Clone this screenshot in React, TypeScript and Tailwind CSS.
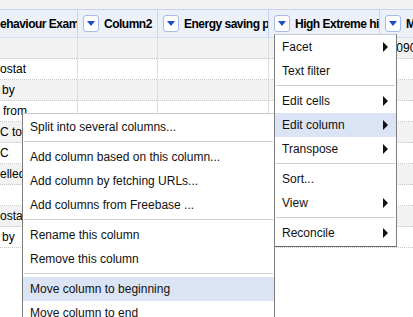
import React from "react";

type Item = { label: string; sub?: boolean; active?: boolean } | "sep";

const mainMenu: Item[] = [
  { label: "Facet", sub: true },
  { label: "Text filter" },
  "sep",
  { label: "Edit cells", sub: true },
  { label: "Edit column", sub: true, active: true },
  { label: "Transpose", sub: true },
  "sep",
  { label: "Sort..." },
  { label: "View", sub: true },
  "sep",
  { label: "Reconcile", sub: true },
];

const editColumnMenu: Item[] = [
  { label: "Split into several columns..." },
  "sep",
  { label: "Add column based on this column..." },
  { label: "Add column by fetching URLs..." },
  { label: "Add columns from Freebase ..." },
  "sep",
  { label: "Rename this column" },
  { label: "Remove this column" },
  "sep",
  { label: "Move column to beginning", active: true },
  { label: "Move column to end" },
];

// first column is scrolled, so only the tail of each value shows
const rows: { text: string; pad?: string; last?: string }[] = [
  { text: "", last: "20090" },
  { text: "ostat" },
  { text: "by", pad: "pl-[2px]" },
  { text: "from", pad: "pl-[3px]" },
  { text: "C to" },
  { text: "C" },
  { text: "elled)" },
  { text: "" },
  { text: "ostat" },
  { text: "by", pad: "pl-[2px]" },
];

function DropBtn() {
  return (
    <span className="flex h-[17px] w-[16px] shrink-0 items-center justify-center rounded-[3px] border border-[#a6bce6] bg-white">
      <span className="h-0 w-0 border-x-[4px] border-t-[5px] border-x-transparent border-t-[#1d4ccc]" />
    </span>
  );
}

function HeadCell({ title, w, last }: { title: string; w: string; last?: boolean }) {
  return (
    <div className={`flex items-center gap-[5px] overflow-hidden whitespace-nowrap pl-[5px] ${w} ${last ? "" : "border-r border-[#c5d3ef]"}`}>
      <DropBtn />
      <span className="text-[12px] font-bold tracking-[-0.5px] text-black">{title}</span>
    </div>
  );
}

function Menu({ items, className }: { items: Item[]; className: string }) {
  return (
    <div className={`absolute border border-x-[#7d7d7d] border-t-[#c9c9c9] border-b-[#6b6b6b] bg-white ${className}`}>
      {items.map((it, i) =>
        it === "sep" ? (
          <div key={i} className="mx-px mt-[2px] mb-[3px] h-px bg-[#cfcfcf]" />
        ) : (
          <div
            key={i}
            className={`flex h-[24px] items-center justify-between pl-[7px] pr-[8px] text-[12px] text-[#111] whitespace-nowrap ${it.active ? "bg-[#dae4f5]" : ""}`}
          >
            <span>{it.label}</span>
            {it.sub && <span className="h-0 w-0 border-y-[5px] border-l-[5px] border-y-transparent border-l-[#111]" />}
          </div>
        )
      )}
    </div>
  );
}

export default function App() {
  return (
    <div className="relative h-[317px] w-[413px] overflow-hidden bg-white font-['Liberation_Sans',Arial,sans-serif]">
      <div className="h-[9px] bg-[#f2f2f2]" />

      {/* column headers */}
      <div className="flex h-[29px] border-y border-t-[#c5d3ef] border-b-[#d3def3] bg-[#ebf0f9]">
        <div className="flex w-[78px] items-center overflow-hidden whitespace-nowrap border-r border-[#c5d3ef]">
          <span className="text-[12px] font-bold tracking-[-0.5px] text-black">ehaviour Example</span>
        </div>
        <HeadCell title="Column2" w="w-[80px]" />
        <HeadCell title="Energy saving potential" w="w-[111px]" />
        <HeadCell title="High Extreme high" w="w-[111px]" />
        <HeadCell title="Measure" w="flex-1" last />
      </div>

      {/* rows */}
      {rows.map((r, i) => (
        <div
          key={i}
          className={`flex h-[21px] border-b border-dotted border-[#c8c8c8] text-[12px] text-black ${i % 2 === 0 ? "bg-[#f2f2f2]" : "bg-white"}`}
        >
          <div className={`flex w-[78px] items-center overflow-hidden whitespace-nowrap border-r border-[#dcdcdc] ${r.pad ?? ""}`}>{r.text}</div>
          <div className="w-[80px] border-r border-[#dcdcdc]" />
          <div className="w-[111px] border-r border-[#dcdcdc]" />
          <div className="w-[111px] border-r border-[#dcdcdc]" />
          <div className="flex flex-1 items-center overflow-hidden whitespace-nowrap pl-[3px]">{r.last ?? ""}</div>
        </div>
      ))}

      <Menu items={editColumnMenu} className="left-[22px] top-[113px] w-[253px] pt-px" />
      <Menu items={mainMenu} className="left-[274px] top-[34px] w-[123px] pb-px" />
    </div>
  );
}
